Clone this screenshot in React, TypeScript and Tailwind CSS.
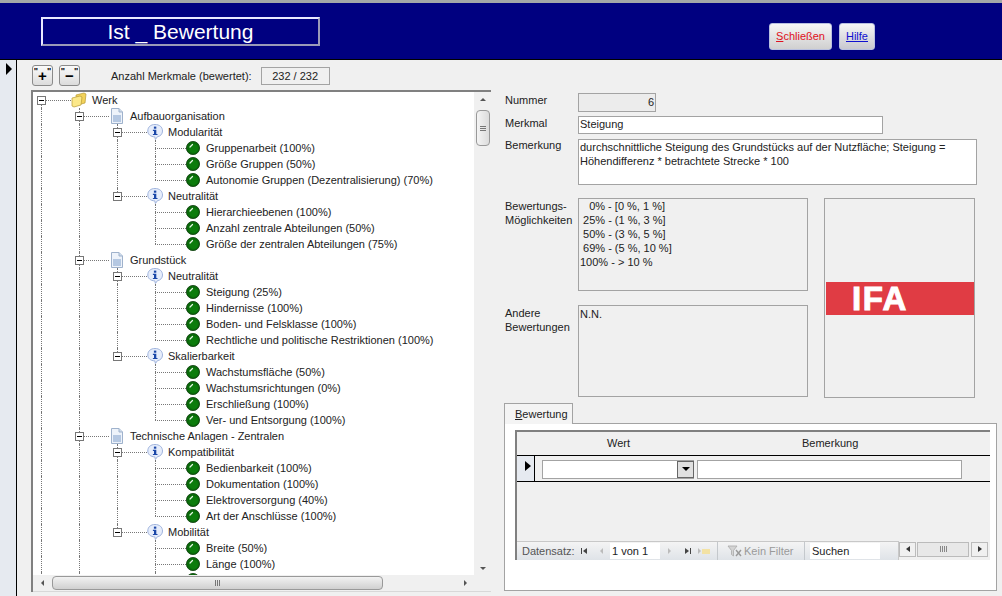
const font = "[font-family:'Liberation_Sans',Arial,sans-serif]";

type Node = { label: string; children?: Node[] };

const tree: Node = {
  label: "Werk",
  children: [
    {
      label: "Aufbauorganisation",
      children: [
        {
          label: "Modularität",
          children: [
            { label: "Gruppenarbeit (100%)" },
            { label: "Größe Gruppen (50%)" },
            { label: "Autonomie Gruppen (Dezentralisierung) (70%)" },
          ],
        },
        {
          label: "Neutralität",
          children: [
            { label: "Hierarchieebenen (100%)" },
            { label: "Anzahl zentrale Abteilungen (50%)" },
            { label: "Größe der zentralen Abteilungen (75%)" },
          ],
        },
      ],
    },
    {
      label: "Grundstück",
      children: [
        {
          label: "Neutralität",
          children: [
            { label: "Steigung (25%)" },
            { label: "Hindernisse (100%)" },
            { label: "Boden- und Felsklasse (100%)" },
            { label: "Rechtliche und politische Restriktionen (100%)" },
          ],
        },
        {
          label: "Skalierbarkeit",
          children: [
            { label: "Wachstumsfläche (50%)" },
            { label: "Wachstumsrichtungen (0%)" },
            { label: "Erschließung (100%)" },
            { label: "Ver- und Entsorgung (100%)" },
          ],
        },
      ],
    },
    {
      label: "Technische Anlagen - Zentralen",
      children: [
        {
          label: "Kompatibilität",
          children: [
            { label: "Bedienbarkeit (100%)" },
            { label: "Dokumentation (100%)" },
            { label: "Elektroversorgung (40%)" },
            { label: "Art der Anschlüsse (100%)" },
          ],
        },
        {
          label: "Mobilität",
          children: [
            { label: "Breite (50%)" },
            { label: "Länge (100%)" },
            { label: "" },
          ],
        },
      ],
    },
  ],
};

function FolderIcon() {
  return (
    <svg width="16" height="16" viewBox="0 0 16 16" className="shrink-0">
      <path d="M5 3 L13 1 L15 2 L14 11 L6 13 Z" fill="#f2d25a" stroke="#b89a32" strokeWidth="0.7" />
      <path d="M1 6 L9 4 L11 5 L10 13 L3 15 L1 14 Z" fill="#fbe88a" stroke="#b89a32" strokeWidth="0.7" />
    </svg>
  );
}

function DocIcon() {
  return (
    <svg width="16" height="16" viewBox="0 0 16 16" className="shrink-0">
      <path d="M2.5 0.5 H10 L13.5 4 V15.5 H2.5 Z" fill="#eef3fa" stroke="#9fb2cc" />
      <path d="M10 0.5 V4 H13.5" fill="#cfdcec" stroke="#9fb2cc" />
      <rect x="4" y="7" width="8" height="7" fill="#b5c8e2" />
    </svg>
  );
}

function InfoIcon() {
  return (
    <svg width="16" height="16" viewBox="0 0 16 16" className="shrink-0">
      <path d="M8 0.5 C12.5 0.5 15.5 3 15.5 7 C15.5 10.2 13.4 12.2 10.4 12.7 L8.4 15.5 L7.8 12.9 C3.6 12.7 0.8 10.4 0.8 7 C0.8 3 3.6 0.5 8 0.5 Z" fill="#e6edfb" stroke="#9fb3dc" />
      <rect x="6.9" y="2.6" width="2.4" height="2.1" fill="#1a47a8" />
      <path d="M5.9 5.8 H9.3 V9.9 H10.5 V11.1 H5.9 V9.9 H7 V7 H5.9 Z" fill="#1a47a8" />
    </svg>
  );
}

function BallIcon() {
  return (
    <svg width="14" height="14" viewBox="0 0 14 14" className="shrink-0">
      <circle cx="7" cy="7" r="6.6" fill="#0a6a0a" stroke="#0c3d0c" strokeWidth="0.8" />
      <circle cx="7.5" cy="7.5" r="4.5" fill="#0c7c0c" />
      <path d="M4 6 L6.5 3.5" stroke="#e6f5e6" strokeWidth="1.2" strokeLinecap="round" />
    </svg>
  );
}

// one column of the tree, with the dotted line of an open ancestor
function Guide({ on }: { on: boolean }) {
  return (
    <div className="w-[38px] h-4 pl-2 shrink-0">
      {on && <div className="h-full border-l border-dotted border-[#777]" />}
    </div>
  );
}

function Row({ node, depth, guides, last }: { node: Node; depth: number; guides: boolean[]; last: boolean }) {
  const isLeaf = !node.children;
  const icon = depth === 0 ? <FolderIcon /> : depth === 1 ? <DocIcon /> : <InfoIcon />;

  return (
    <>
      <div className="flex h-4 items-center">
        {guides.map((on, i) => (
          <Guide key={i} on={on} />
        ))}
        {isLeaf ? (
          <>
            <div className="relative w-[39px] h-4 shrink-0">
              <div className={`ml-2 border-l border-dotted border-[#777] ${last ? "h-2" : "h-4"}`} />
              <div className="absolute left-2 right-0 top-2 border-t border-dotted border-[#777]" />
            </div>
            <BallIcon />
            <span className="ml-[6px] whitespace-nowrap">{node.label}</span>
          </>
        ) : (
          <>
            <div className="relative w-[38px] h-4 shrink-0">
              {depth === 0 ? (
                <div className="ml-2 mt-[13px] h-[3px] border-l border-dotted border-[#777]" />
              ) : (
                <div className={`ml-2 border-l border-dotted border-[#777] ${last ? "h-1" : "h-4"}`} />
              )}
              <div className="absolute left-3 right-0 top-2 border-t border-dotted border-[#777]" />
              <div className="absolute left-1 top-[4px] w-[9px] h-[9px] border border-[#777] bg-white flex items-center justify-center">
                <div className="w-[5px] h-px bg-black" />
              </div>
            </div>
            <div className="mr-[5px]">{icon}</div>
            <span className="whitespace-nowrap">{node.label}</span>
          </>
        )}
      </div>
      {node.children?.map((c, i) => (
        <Row
          key={i}
          node={c}
          depth={depth + 1}
          guides={[...guides, depth === 0 ? true : !last]}
          last={depth > 0 && i === node.children!.length - 1}
        />
      ))}
    </>
  );
}

function Tree() {
  return (
    <div className="w-[460px] h-[502px] shrink-0 border-t-2 border-l-2 border-[#808080] bg-white flex flex-col text-[11px] text-[#222]">
      <div className="flex flex-1 min-h-0">
        <div className="flex-1 min-w-0 overflow-hidden">
          <Row node={tree} depth={0} guides={[]} last={true} />
        </div>
        <div className="w-[17px] bg-[#f0f0f0] flex flex-col items-center shrink-0 pt-[6px] pb-[2px]">
          <div className="w-0 h-0 border-x-[3px] border-x-transparent border-b-[3px] border-b-[#555]" />
          <div className="mt-[9px] w-[14px] h-9 rounded-sm border border-[#999] bg-gradient-to-r from-[#f4f4f4] to-[#dcdcdc] flex flex-col items-center justify-center gap-px">
            <div className="w-[6px] h-px bg-[#777]" />
            <div className="w-[6px] h-px bg-[#777]" />
            <div className="w-[6px] h-px bg-[#777]" />
          </div>
          <div className="flex-1" />
          <div className="w-0 h-0 border-x-[3px] border-x-transparent border-t-[3px] border-t-[#555] mb-[3px]" />
        </div>
      </div>
      <div className="h-[17px] bg-[#f0f0f0] flex items-center shrink-0 border-b border-[#d8d8d8]">
        <div className="w-[19px] flex justify-center">
          <div className="w-0 h-0 border-y-[3px] border-y-transparent border-r-[3px] border-r-[#555]" />
        </div>
        <div className="w-[331px] h-[14px] rounded-sm border border-[#999] bg-gradient-to-b from-[#f2f2f2] to-[#d0d0d0] flex items-center justify-center gap-px">
          <div className="w-px h-[6px] bg-[#777]" />
          <div className="w-px h-[6px] bg-[#777]" />
          <div className="w-px h-[6px] bg-[#777]" />
        </div>
        <div className="flex-1" />
        <div className="w-0 h-0 border-y-[3px] border-y-transparent border-l-[3px] border-l-[#555] mr-[24px]" />
      </div>
    </div>
  );
}

function Box({ className, children }: { className: string; children?: React.ReactNode }) {
  return <div className={`border border-[#a3a3a3] ${className}`}>{children}</div>;
}

function Details() {
  return (
    <div className="flex-1 min-w-0 pl-[14px] text-[11px] text-[#222]">
      <div className="flex h-[19px] mt-[3px]">
        <div className="w-[73px] leading-[15px]">Nummer</div>
        <Box className="w-[78px] h-[19px] bg-[#ececec] text-right pr-px leading-[17px]">6</Box>
      </div>
      <div className="flex mt-[4px]">
        <div className="w-[73px] leading-[14px]">Merkmal</div>
        <Box className="w-[305px] h-[18px] bg-white pl-[1px] leading-[14px]">Steigung</Box>
      </div>
      <div className="flex mt-[5px]">
        <div className="w-[73px] leading-[13px]">Bemerkung</div>
        <Box className="w-[399px] h-[46px] bg-white pl-[1px] leading-[14px]">
          durchschnittliche Steigung des Grundstücks auf der Nutzfläche; Steigung = Höhendifferenz * betrachtete Strecke * 100
        </Box>
      </div>
      <div className="flex mt-[13px]">
        <div className="w-[73px] leading-[14px] pt-[1px]">
          <div>Bewertungs-</div>
          <div>Möglichkeiten</div>
        </div>
        <div className="w-[246px]">
          <Box className="w-[230px] h-[93px] pl-px leading-[14px] whitespace-pre">
            {"   0% - [0 %, 1 %]\n 25% - (1 %, 3 %]\n 50% - (3 %, 5 %]\n 69% - (5 %, 10 %]\n100% - > 10 %"}
          </Box>
          <div className="flex mt-[14px] -ml-[73px]">
            <div className="w-[73px] leading-[14px] pt-[1px]">
              <div>Andere</div>
              <div>Bewertungen</div>
            </div>
            <Box className="w-[230px] h-[92px] pl-px pt-[1px] leading-[14px]">N.N.</Box>
          </div>
        </div>
        <Box className="w-[151px] h-[200px] flex items-center">
          <div className="w-[148px] h-[33px] ml-[1px] bg-[#e03c44] pl-[26px] text-white font-bold text-[33px] leading-[33px] tracking-[1.5px] [-webkit-text-stroke:1px_white]">
            IFA
          </div>
        </Box>
      </div>
    </div>
  );
}

function TabPanel() {
  return (
    <div className="mt-[5px] -ml-px text-[11px] text-[#222]">
      <div className="w-[69px] h-[21px] border border-b-0 border-[#a3a3a3] pl-[10px] leading-[20px] bg-[#f4f4f4] relative z-10 -mb-px">
        <span className="underline decoration-[#222]">B</span>ewertung
      </div>
      <div className="w-[493px] h-[168px] border border-[#a3a3a3] bg-white pt-[6px] pl-[10px]">
        <div className="w-[475px] border-t-2 border-l-2 border-[#808080] bg-[#f0f0f0]">
          <div className="h-[24px] flex border-b border-black items-center">
            <div className="w-[169px] pl-[90px]">Wert</div>
            <div className="pl-[116px]">Bemerkung</div>
          </div>
          <div className="h-[26px] flex border-b border-black">
            <div className="w-[18px] bg-[#e6eaf0] border-r border-black shrink-0 pt-[5px] pl-[8px]">
              <div className="w-0 h-0 border-y-[5px] border-y-transparent border-l-[6px] border-l-black" />
            </div>
            <div className="flex items-center pl-[7px] pt-px gap-[3px]">
              <div className="w-[152px] h-[19px] border border-[#a3a3a3] bg-white flex justify-end">
                <div className="w-[17px] h-full border border-[#666] bg-[#e0e0e0] flex items-center justify-center -mr-px">
                  <div className="w-0 h-0 border-x-[4px] border-x-transparent border-t-[4px] border-t-black" />
                </div>
              </div>
              <div className="w-[265px] h-[19px] border border-[#a3a3a3] bg-white" />
            </div>
          </div>
          <div className="h-[59px]" />
          <Nav />
        </div>
      </div>
    </div>
  );
}

function Nav() {
  const arrow = "w-0 h-0 border-y-[3px] border-y-transparent";
  return (
    <div className="h-[19px] flex text-[11px] text-[#777] bg-[#f0f0f0]">
      <div className="w-[382px] h-full flex items-center shrink-0 border-t border-[#c8c8c8] border-r bg-gradient-to-b from-[#f4f4f4] to-[#dfe3e8]">
        <span className="ml-[5px] w-[53px] text-[#555] whitespace-nowrap">Datensatz:</span>
        <div className="ml-[6px] flex items-center gap-px">
          <div className="w-px h-[6px] bg-[#444]" />
          <div className={`${arrow} border-r-[4px] border-r-[#444]`} />
        </div>
        <div className={`ml-[13px] ${arrow} border-r-[3px] border-r-[#bbb]`} />
        <div className="ml-[7px] w-[50px] h-[16px] bg-white text-[#222] leading-[16px] pl-[2px]">1 von 1</div>
        <div className={`ml-[8px] ${arrow} border-l-[3px] border-l-[#bbb]`} />
        <div className="ml-[14px] flex items-center gap-px">
          <div className={`${arrow} border-l-[4px] border-l-[#444]`} />
          <div className="w-px h-[6px] bg-[#444]" />
        </div>
        <div className="ml-[7px] flex items-center gap-px">
          <div className={`${arrow} border-l-[3px] border-l-[#bbb]`} />
          <div className="w-2 h-[5px] bg-[#f3e2a4]" />
        </div>
        <div className="ml-[7px] h-full border-l border-[#c4c8cc] pl-[9px] flex items-center gap-[2px] w-[87px] text-[#9a9a9a]">
          <svg width="15" height="13" viewBox="0 0 15 13" className="shrink-0">
            <path d="M1 1 H10 L6.5 5.5 V11 L4.5 9.5 V5.5 Z" fill="#d4d4d4" stroke="#aaa" strokeWidth="0.8" />
            <path d="M9 5 L14 11 M14 5 L9 11" stroke="#999" strokeWidth="1.4" />
          </svg>
          <span className="whitespace-nowrap">Kein Filter</span>
        </div>
        <div className="h-full border-l border-[#c4c8cc] pl-[5px] flex items-center">
          <div className="w-[70px] h-[16px] bg-white text-[#222] leading-[16px] pl-[2px]">Suchen</div>
        </div>
      </div>
      <div className="flex-1 flex items-center gap-px pb-[3px]">
        <div className="w-[17px] h-[15px] border border-[#bbb] bg-[#f0f0f0] flex items-center justify-center">
          <div className={`${arrow} border-r-[4px] border-r-[#333]`} />
        </div>
        <div className="w-[52px] h-[15px] border border-[#bbb] bg-[#e8e8e8] flex items-center justify-center gap-px">
          <div className="w-px h-[6px] bg-[#888]" />
          <div className="w-px h-[6px] bg-[#888]" />
          <div className="w-px h-[6px] bg-[#888]" />
          <div className="w-px h-[6px] bg-[#888]" />
        </div>
        <div className="ml-px w-[17px] h-[15px] border border-[#bbb] bg-[#f0f0f0] flex items-center justify-center">
          <div className={`${arrow} border-l-[4px] border-l-[#333]`} />
        </div>
      </div>
    </div>
  );
}

function ToolButton({ label }: { label: string }) {
  return (
    <div className="w-[21px] h-[21px] rounded-[3px] border border-[#8a8a8a] bg-gradient-to-b from-[#fafafa] to-[#dcdcdc] flex items-center justify-center text-black font-bold text-[15px] leading-none">
      <span className="text-[9px] self-start mt-px">&quot;</span>
      <span>{label}</span>
      <span className="text-[9px] self-start mt-px">&quot;</span>
    </div>
  );
}

export default function App() {
  return (
    <div className={`w-[1002px] h-[596px] overflow-hidden flex flex-col bg-[#f0f0f0] ${font}`}>
      <div className="h-[3px] bg-[#a3a7a8] shrink-0" />
      <div className="h-[57px] bg-[#000080] flex items-start shrink-0 border-b border-black">
        <div className="ml-[41px] mt-[14px] w-[279px] h-[29px] border-2 border-t-[#e8e8ff] border-l-[#e8e8ff] border-r-[#9a9ab8] border-b-[#9a9ab8] text-white text-[21px] leading-[25px] text-center whitespace-pre">
          Ist _ Bewertung
        </div>
        <div className="ml-[449px] mt-[20px] w-[63px] h-[27px] rounded-[3px] border border-[#b9c0e0] bg-gradient-to-b from-[#f6f6f6] to-[#d0d0d0] text-[11px] text-[#e01020] flex items-center justify-center pb-px">
          <span className="underline">S</span>chließen
        </div>
        <div className="ml-[7px] mt-[20px] w-[36px] h-[27px] rounded-[3px] border border-[#b9c0e0] bg-gradient-to-b from-[#f6f6f6] to-[#c8c8d0] text-[11px] text-[#1010d0] flex items-center justify-center pb-px">
          <span className="underline">Hilfe</span>
        </div>
      </div>
      <div className="flex flex-1 min-h-0">
        <div className="w-[17px] bg-[#e6eaf0] border-r border-black shrink-0 pt-[3px] pl-[6px]">
          <div className="w-0 h-0 border-y-[6px] border-y-transparent border-l-[6px] border-l-black" />
        </div>
        <div className="flex-1 min-w-0 pl-[14px]">
          <div className="flex items-start pt-[5px] h-[30px] text-[11px] text-[#222]">
            <div className="ml-px flex gap-[6px]">
              <ToolButton label="+" />
              <ToolButton label="−" />
            </div>
            <div className="ml-[31px] mt-[3px]">Anzahl Merkmale (bewertet):</div>
            <Box className="ml-[9px] mt-[2px] w-[69px] h-[18px] text-center leading-[17px]">232 / 232</Box>
          </div>
          <div className="flex">
            <Tree />
            <div className="flex-1 min-w-0">
              <Details />
              <div className="pl-[14px]">
                <TabPanel />
              </div>
            </div>
          </div>
        </div>
      </div>
    </div>
  );
}
